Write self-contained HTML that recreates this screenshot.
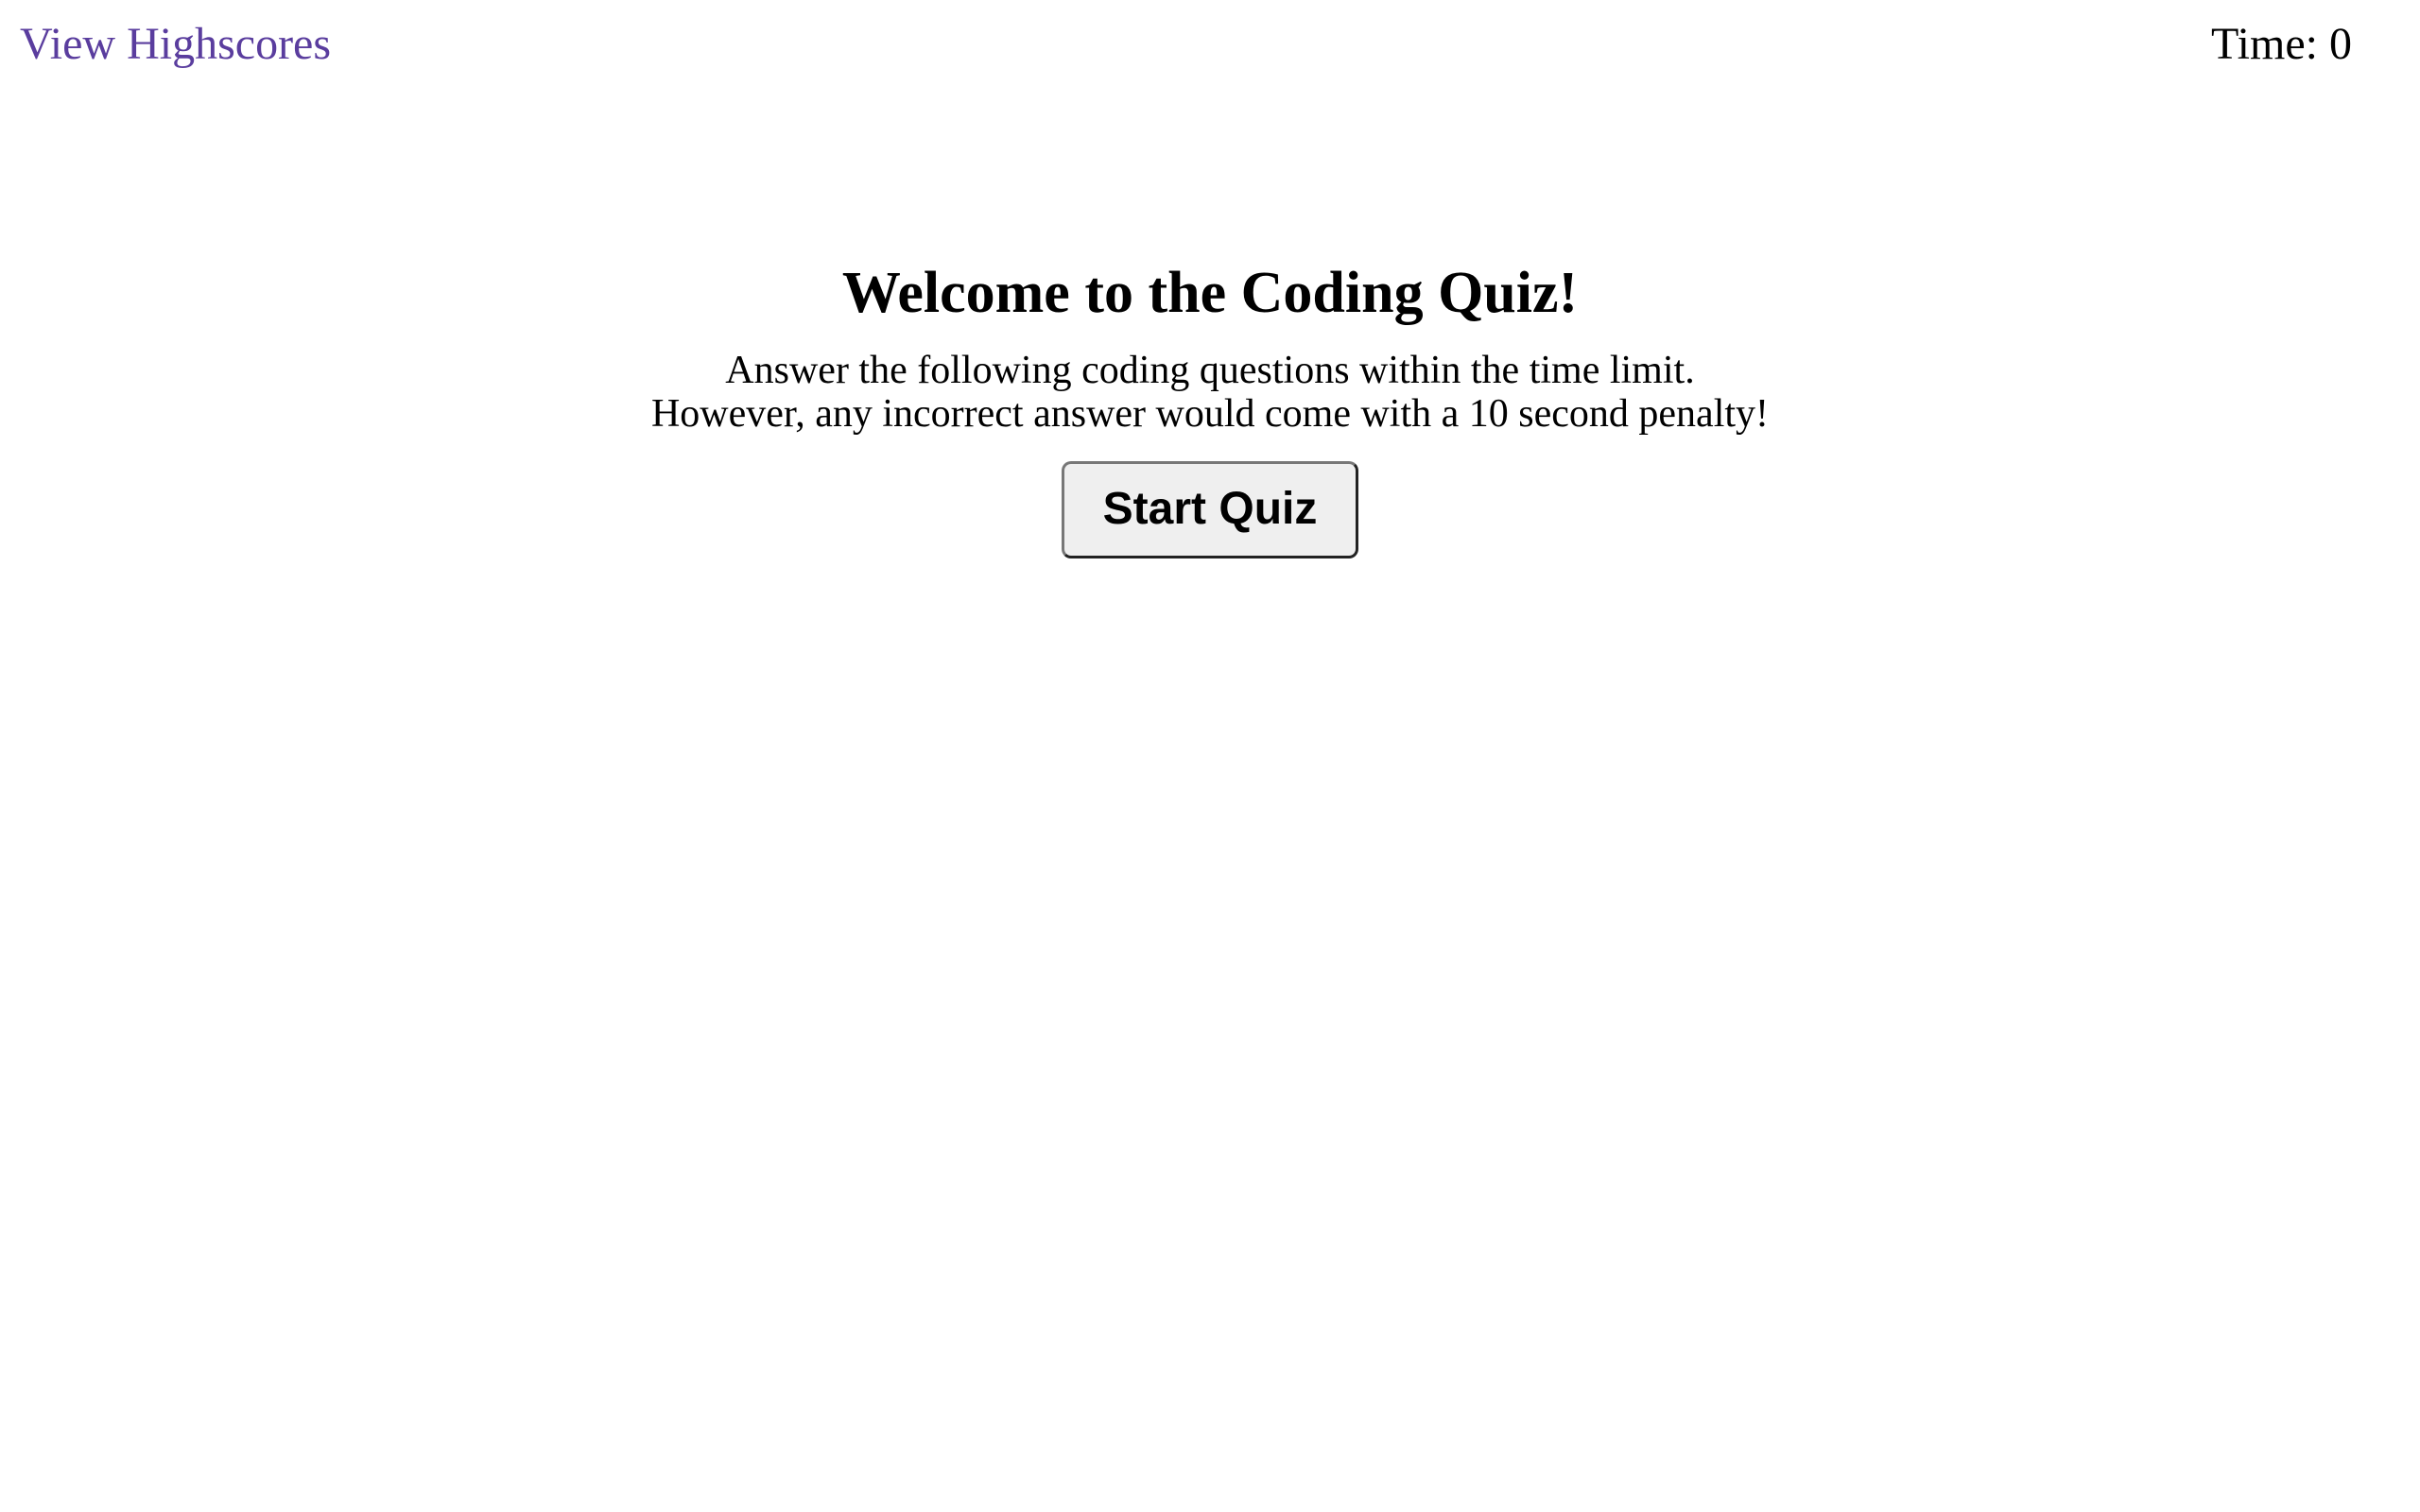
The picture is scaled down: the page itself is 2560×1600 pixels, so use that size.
<!DOCTYPE html>
<html><head><meta charset="utf-8"><style>
html,body{margin:0;padding:0;background:#fff;width:2560px;height:1600px;overflow:hidden}
.hs{position:absolute;left:21px;top:15px;font:48px "Liberation Serif",serif;color:#5a3d9e;line-height:64px}
.tm{position:absolute;right:72px;top:15px;font:48px "Liberation Serif",serif;color:#000;line-height:64px}
h1{position:absolute;left:0;width:2560px;top:274px;margin:0;text-align:center;font:bold 62px "Liberation Serif",serif;line-height:72px}
p{position:absolute;left:0;width:2560px;top:369px;margin:0;text-align:center;font:42px "Liberation Serif",serif;line-height:46px}
.btn{position:absolute;left:1123px;top:488px;width:314px;height:103px;box-sizing:border-box;border:3px solid;border-color:#777 #222 #222 #777;border-radius:10px;background:#efefef;font:bold 48px "Liberation Sans",sans-serif;text-align:center;line-height:95px;color:#000}
</style></head><body>
<div class="hs">View Highscores</div>
<div class="tm">Time: 0</div>
<h1>Welcome to the Coding Quiz!</h1>
<p>Answer the following coding questions within the time limit.<br>However, any incorrect answer would come with a 10 second penalty!</p>
<div class="btn">Start Quiz</div>
</body></html>
